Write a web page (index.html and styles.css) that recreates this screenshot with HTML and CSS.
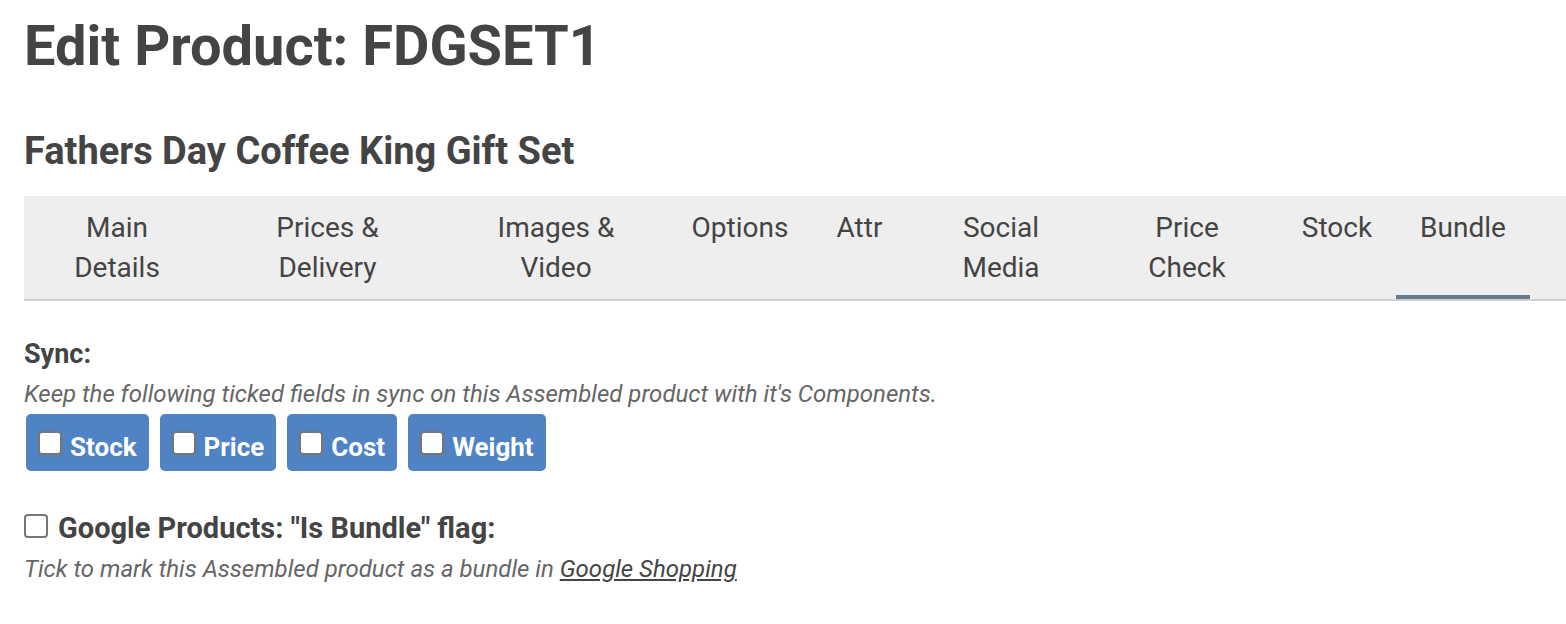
FILE: index.html
```html
<!DOCTYPE html>
<html>
<head>
<meta charset="utf-8">
<link rel="stylesheet" href="styles.css">
</head>
<body>
<div class="page">
  <h1 class="title">Edit Product: FDGSET1</h1>
  <h2 class="subtitle">Fathers Day Coffee King Gift Set</h2>
  <nav class="tabs">
    <a class="tab">Main Details</a>
    <a class="tab">Prices &amp; Delivery</a>
    <a class="tab">Images &amp; Video</a>
    <a class="tab">Options</a>
    <a class="tab">Attr</a>
    <a class="tab">Social Media</a>
    <a class="tab">Price Check</a>
    <a class="tab">Stock</a>
    <a class="tab active">Bundle</a>
  </nav>
  <section class="panel">
    <div class="field">
      <div class="label">Sync:</div>
      <div class="help">Keep the following ticked fields in sync on this Assembled product with it's Components.</div>
      <div class="sync-buttons">
        <label class="sync-btn"><span class="box"></span>Stock</label>
        <label class="sync-btn"><span class="box"></span>Price</label>
        <label class="sync-btn"><span class="box"></span>Cost</label>
        <label class="sync-btn"><span class="box"></span>Weight</label>
      </div>
    </div>
    <div class="field google">
      <label class="check-label"><span class="box plain"></span>Google Products: "Is Bundle" flag:</label>
      <div class="help">Tick to mark this Assembled product as a bundle in <a class="link">Google Shopping</a></div>
    </div>
  </section>
</div>
</body>
</html>
```
FILE: styles.css
```css
html, body {
  margin: 0;
  padding: 0;
  background: #fff;
}
body {
  font-family: Roboto, "Liberation Sans", sans-serif;
  color: #444;
  overflow: hidden;
}
.page {
  padding-left: 24px;
}
.title {
  margin: 0;
  padding-top: 12px;
  font-size: 56px;
  line-height: 68px;
  font-weight: 700;
  color: #444;
}
.subtitle {
  margin: 0;
  padding-top: 48px;
  font-size: 38px;
  line-height: 46px;
  font-weight: 700;
  color: #444;
}
.tabs {
  margin-top: 22px;
  background: #eee;
  border-bottom: 2px solid #d0d0d0;
  display: grid;
  grid-template-columns: 186px 235px 222px 146px 93px 190px 182px 118px 134px;
  height: 103px;
}
.tab {
  position: relative;
  padding: 12px 20px 0;
  text-align: center;
  font-size: 28px;
  line-height: 40px;
  color: #444;
}
.tab.active::after {
  content: "";
  position: absolute;
  left: 0;
  right: 0;
  bottom: 0;
  height: 4px;
  background: #637b8d;
}
.panel {
  padding-top: 38px;
}
.label {
  font-size: 27px;
  line-height: 30px;
  font-weight: 700;
}
.help {
  font-style: italic;
  font-size: 24px;
  line-height: 30px;
  color: #666;
  margin-top: 10px;
}
.sync-buttons {
  display: flex;
  gap: 11px;
  margin-top: 5px;
  padding-left: 2px;
}
.sync-btn {
  display: flex;
  align-items: center;
  gap: 8px;
  background: #4f83c4;
  color: #fff;
  font-weight: 700;
  font-size: 26px;
  border-radius: 5px;
  padding: 18px 12px 10px;
  height: 57px;
  box-sizing: border-box;
}
.box {
  width: 24px;
  height: 24px;
  background: #fff;
  border: 2px solid #767676;
  border-radius: 4px;
  box-sizing: border-box;
  margin-top: -7px;
}
.google {
  margin-top: 40px;
}
.check-label {
  display: flex;
  align-items: center;
  gap: 10px;
  font-size: 29px;
  font-weight: 700;
  line-height: 34px;
}
.box.plain {
  width: 24px;
  height: 24px;
  margin-top: -4px;
}
.google .help {
  margin-top: 9px;
}
.link {
  color: #444;
  text-decoration: underline;
}
```
